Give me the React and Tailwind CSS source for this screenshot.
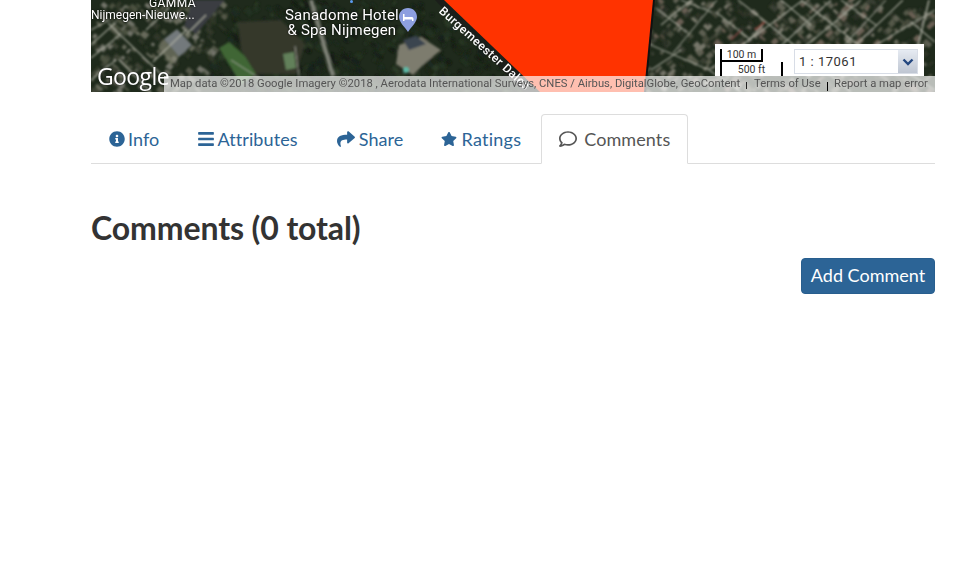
import React from "react";
import { FaInfoCircle, FaBars, FaShare, FaStar, FaRegComment } from "react-icons/fa";

function rand(seed) {
  let s = seed;
  return () => {
    s = (s * 16807) % 2147483647;
    return s / 2147483647;
  };
}

const URBAN = ["#474c3c", "#5f6153", "#2e3428", "#6b6054", "#2a3026", "#55594a", "#77776a", "#3b4034"];
const SUBURB = ["#555949", "#686b5c", "#3c4334", "#4b5141", "#303829", "#73756a"];
const FOREST = ["#1c2718", "#243220", "#141c12", "#2c3a26", "#18211a", "#1f2a20"];

function MapArt() {
  const r = rand(4242);
  const blobs = [];
  for (let i = 0; i < 1500; i++) {
    const x = r() * 844, y = r() * 92;
    const left = x < 112 - y * 0.35 + 30 && y > 0;
    const right = x > 550;
    const set = right ? URBAN : left ? SUBURB : FOREST;
    const c = set[Math.floor(r() * set.length)];
    const a = right ? (r() > 0.5 ? 42 : -42) : 40;
    blobs.push(<rect key={i} x={x} y={y} width={2 + r() * 7} height={2 + r() * 4} fill={c} transform={`rotate(${a} ${x} ${y})`} />);
  }
  return (
    <svg className="absolute inset-0 h-full w-full" viewBox="0 0 844 92" preserveAspectRatio="none">
      <defs>
        <filter id="b"><feGaussianBlur stdDeviation="0.8" /></filter>
      </defs>
      <rect width="844" height="92" fill="#1f2a1c" />
      <g filter="url(#b)">
        {blobs}
        <polygon points="102,0 134,0 105,34 93,26" fill="#3b3d42" />
        <polygon points="73,39 86,29 101,45 88,57" fill="#73797c" />
        <polygon points="67,46 73,39 88,57 80,65" fill="#8a8a78" opacity="0.6" />
        <polygon points="128,48 138,42 170,70 150,84" fill="#3f6636" />
        <polygon points="147,22 190,20 214,44 205,74 165,74 150,50" fill="#34372b" />
        <polygon points="192,54 203,52 205,68 195,70" fill="#62805a" />
        <polygon points="308,45 330,37 350,50 333,64 322,75 305,64" fill="#7d7c6e" />
        <polygon points="312,40 325,36 335,44 318,50" fill="#3b4450" />
        <circle cx="315" cy="70" r="3" fill="#5cb8a5" />
        <g fill="none" stroke="#b0b1a5" strokeOpacity="0.85">
          <path d="M0 30 L18 20 M17 23 L73 77 M0 45 L25 22 M0 58 L30 34 M55 30 L78 8 M62 62 L95 30 M95 35 L115 15 M0 80 L25 60 M28 60 L60 92" strokeWidth="1.2" />
          <path d="M220 0 L242 76" strokeWidth="4" stroke="#8e9186" />
          <path d="M140 60 L168 78 M204 46 L208 76" strokeWidth="0.9" />
          <path d="M553 42 L618 70 L650 92 M582 53 L626 0 M618 70 L712 0 M597 33 L565 8 M620 12 L590 0 M647 0 L675 22 L760 92 M625 12 L660 40 M672 25 L640 58 M710 0 L790 62 M740 0 L680 55 M770 0 L710 50 M795 0 L740 60 M812 0 L765 45 M785 45 L844 10 M800 62 L844 90 M820 22 L844 42 M570 25 L600 0 M560 70 L590 50 M690 0 L720 25 M750 0 L785 25" strokeWidth="1.1" />
          <path d="M838 0 L820 76" strokeWidth="1.6" />
        </g>
        <path d="M664 30 L674 22" stroke="#8a4a40" strokeWidth="2" />
        <path d="M640 40 L650 30" stroke="#6a3f3a" strokeWidth="2" />
      </g>
      <path d="M344 0 L353 0 L449 92 L432 92 Z" fill="#1a1a1a" opacity="0.7" />
      <polygon points="353,0 563,0 554,92 449,92" fill="#ff3300" />
      <line x1="563" y1="0" x2="554" y2="92" stroke="#111" strokeWidth="2" />
      <path d="M317 8 C311.500 8 308 12 308 17 C308 22 313 26 317 32 C321 26 326 22 326 17 C326 12 322.500 8 317 8 Z" fill="#8d9fe0" />
      <path d="M312 21 V14 H313.500 V17 H321 C322 17 322.500 18 322.500 19 V21 H321 V19.500 H313.500 V21 Z" fill="#fff" />
      <rect x="259" y="0" width="3" height="3" rx="1.500" fill="#5b9bf0" />
    </svg>
  );
}

function Tab({ icon, label, active, gap = "gap-[3px]", extra = "", track = "tracking-[0.1px]" }) {
  if (active) {
    return (
      <li className="-mb-px">
        <a className="flex h-[50px] items-center gap-[7px] rounded-t border border-[#ddd] border-b-white bg-white px-[17px] text-[18px] tracking-[0.1px] text-[#555]">
          {icon}
          {label}
        </a>
      </li>
    );
  }
  return (
    <li className={`-mb-px ${extra}`}>
      <a className={`flex h-[50px] items-center ${gap} ${track} rounded-t border border-transparent px-[17px] text-[18px] text-[#2c6496]`}>
        {icon}
        {label}
      </a>
    </li>
  );
}

export default function App() {
  return (
    <div className="min-h-[588px] bg-white font-['Lato',sans-serif] text-[#333]">
      <div className="ml-[91px] w-[844px]">
        <div className="relative h-[92px] overflow-hidden">
          <MapArt />
          <div className="absolute left-[194px] top-[8px] whitespace-nowrap text-center font-['Roboto',sans-serif] text-[15px] leading-[15px] tracking-[0.2px] text-white [text-shadow:0_0_2px_#000]">
            Sanadome Hotel
            <br />
            &amp; Spa Nijmegen
          </div>
          <div className="absolute left-0 top-[-3px] whitespace-nowrap font-['Roboto',sans-serif] text-[12px] leading-[12px] text-white [text-shadow:0_0_2px_#000]">
            <span className="ml-[58px] tracking-[0.4px]">GAMMA</span>
            <br />
            Nijmegen-Nieuwe...
          </div>
          <div className="absolute left-[350px] top-0 origin-left rotate-[42deg] whitespace-nowrap font-['Roboto',sans-serif] text-[12px] font-medium tracking-[0.5px] text-white">
            Burgemeester Dales
          </div>
          <div className="absolute bottom-[3px] left-[6px] font-['Open_Sans',sans-serif] text-[23px] font-medium leading-[26px] tracking-[-0.6px] text-white [text-shadow:0_0_2px_#222]">
            Google
          </div>
          <div className="absolute bottom-0 left-[73px] right-0 flex h-[16px] items-center bg-[#ffffffb0] pl-[6px] pt-px font-['Roboto',sans-serif] text-[11.25px] whitespace-nowrap text-[#555]">
            <span className="w-[584px]">Map data ©2018 Google Imagery ©2018 , Aerodata International Surveys, CNES / Airbus, DigitalGlobe, GeoContent</span>
            <span className="w-[80px]">Terms of Use</span>
            <span>Report a map error</span>
          </div>
          <div className="absolute bottom-[3px] left-[655px] h-[7px] w-px bg-[#222]" />
          <div className="absolute bottom-[1px] left-[736px] h-[9px] w-px bg-black" />
          <div className="absolute left-[624px] top-[44px] flex h-[32px] w-[209px] items-start overflow-hidden bg-white font-['Roboto',sans-serif] text-[#333]">
            <div className="relative ml-[5px] mt-[5px] h-[27px] w-[63px] shrink-0 text-[10.5px]">
              <div className="flex h-[13px] w-[43px] items-center justify-center border-x-2 border-b-2 border-black pt-px">100 m</div>
              <div className="flex h-[14px] w-[63px] items-center justify-center border-x-2 border-black pt-[2px]">500 ft</div>
            </div>
            <div className="ml-[11px] mt-[5px] flex h-[25px] w-[124px] border border-[#d8dde6]">
              <div className="flex-1 pl-[4px] text-[13px] leading-[24px] tracking-[0.5px]">1 : 17061</div>
              <div className="flex w-[19px] items-center justify-center bg-gradient-to-b from-[#e6ebf2] to-[#bfc6d2]">
                <svg width="12" height="8" viewBox="0 0 12 8"><path d="M1.500 1.500 L6 6 L10.500 1.500" stroke="#24477f" strokeWidth="2.400" fill="none" /></svg>
              </div>
            </div>
          </div>
        </div>

        <ul className="mt-[22px] flex gap-[2px] border-b border-[#ddd]">
          <Tab icon={<FaInfoCircle className="text-[16px]" />} label="Info" />
          <Tab icon={<FaBars className="text-[18px]" />} label="Attributes" gap="gap-[2px]" extra="mr-px" />
          <Tab icon={<FaShare className="text-[18px]" />} label="Share" gap="gap-[4px]" />
          <Tab icon={<FaStar className="text-[16px]" />} label="Ratings" gap="gap-[4px]" track="tracking-[0.25px]" />
          <Tab icon={<FaRegComment className="text-[18px]" />} label="Comments" active />
        </ul>

        <h1 className="mt-[46px] text-[32px] font-bold leading-[35px] tracking-[-0.1px] text-[#333]">Comments (0 total)</h1>
        <div className="mt-[13px] flex justify-end">
          <button className="h-[36px] w-[134px] rounded border border-[#285e8e] bg-[#2c6496] pb-[2px] text-[18px] leading-none text-white">Add Comment</button>
        </div>
      </div>
    </div>
  );
}
